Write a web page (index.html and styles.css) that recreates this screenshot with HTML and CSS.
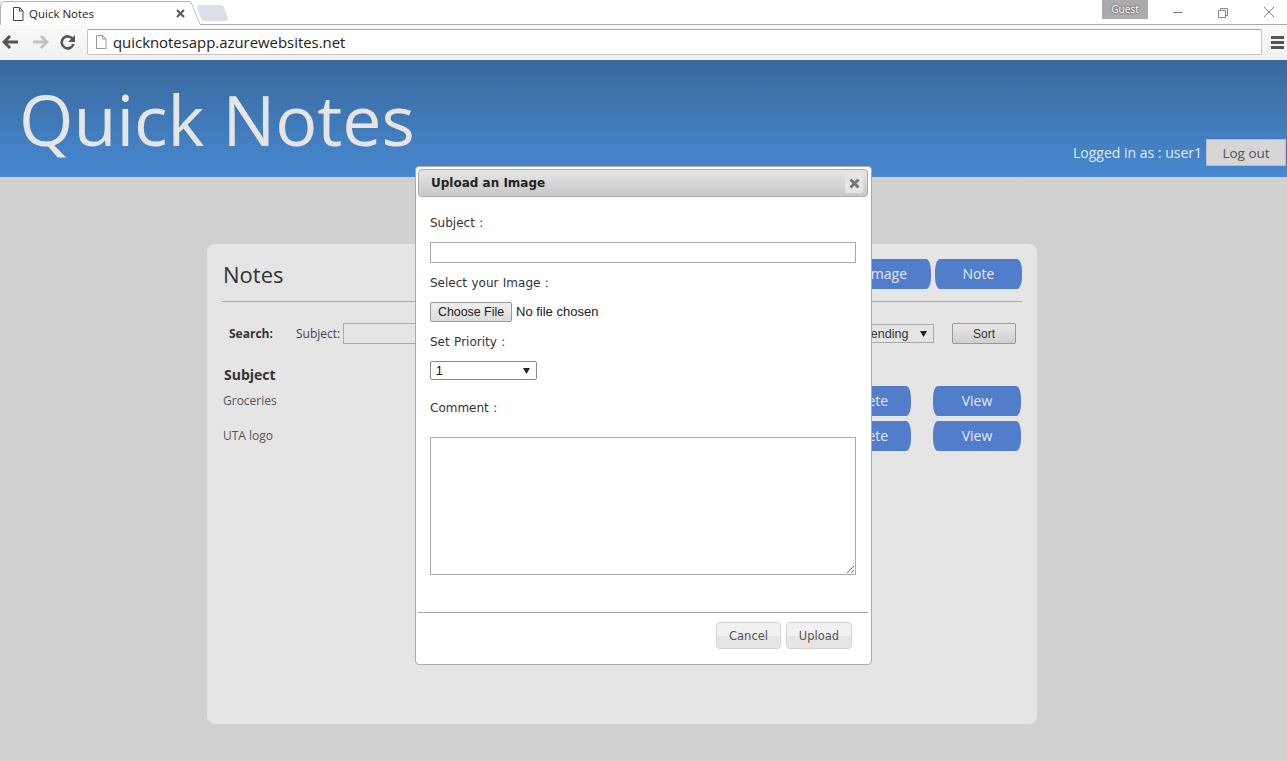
FILE: index.html
```html
<!DOCTYPE html>
<html>
<head>
<meta http-equiv="Content-Type" content="text/html; charset=utf-8"/>
<title>Quick Notes</title>
<link rel="stylesheet" href="styles.css">
</head>
<body>

<div class="browser">
  <div class="tabstrip">
    <div class="tab">
      <svg class="tab-icon" width="12" height="14" viewBox="0 0 12 14"><path d="M1.500 .5h6l3.500 3.500v9.500h-9.500z M7.500 .5v3.500h3.500" fill="#fff" stroke="#444"/></svg>
      <span class="tab-title">Quick Notes</span>
      <svg class="tab-close" width="9" height="9" viewBox="0 0 9 9"><path d="M1 1l7 7M8 1l-7 7" stroke="#555" stroke-width="2"/></svg>
    </div>
    <div class="newtab"></div>
    <div class="winctl">
      <span class="guest">Guest</span>
      <svg class="win-btn" width="46" height="14" viewBox="0 0 46 14"><path d="M25 7.500h10" stroke="#888"/></svg>
      <svg class="win-btn" width="46" height="14" viewBox="0 0 46 14"><path d="M24.500 5.500h7v7h-7zM26.500 5.500v-2h7v7h-2" fill="none" stroke="#888"/></svg>
      <svg class="win-btn" width="46" height="14" viewBox="0 0 46 14"><path d="M24 2l10 10M34 2l-10 10" stroke="#888"/></svg>
    </div>
  </div>
  <div class="toolbar">
    <svg class="nav-icon" width="18" height="14" viewBox="0 0 18 14"><path d="M8 1l-6 6 6 6M2 7h14" fill="none" stroke="#555" stroke-width="3"/></svg>
    <svg class="nav-icon fwd" width="18" height="14" viewBox="0 0 18 14"><path d="M10 1l6 6-6 6M16 7h-14" fill="none" stroke="#c4c4c4" stroke-width="3"/></svg>
    <svg class="nav-icon reload" width="16" height="16" viewBox="0 0 16 16"><path d="M13 5.500a6 6 0 1 0 .5 4.500" fill="none" stroke="#555" stroke-width="2.600"/><path d="M15 1v7h-7z" fill="#555"/></svg>
    <div class="omnibox">
      <svg width="12" height="14" viewBox="0 0 12 14"><path d="M1.500 .5h6l3.500 3.500v9.500h-9.500z M7.500 .5v3.500h3.500" fill="#fff" stroke="#999"/></svg>
      <span>quicknotesapp.azurewebsites.net</span>
    </div>
    <div class="menu-icon"><i></i><i></i><i></i></div>
  </div>
</div>

<div class="header">
  <h1 class="logo">Quick Notes</h1>
  <div class="userbox">
    <span>Logged in as : user1</span>
    <button class="logout">Log out</button>
  </div>
</div>

<div class="content">
  <div class="panel">
    <div class="panel-head">
      <h2>Notes</h2>
      <div class="add-btns">
        <a class="blue-btn add-image">Image</a>
        <a class="blue-btn add-note">Note</a>
      </div>
    </div>
    <div class="searchbar">
      <b>Search:</b>
      <label>Subject:</label>
      <input class="search-input" type="text">
      <span class="spacer"></span>
      <select class="order"><option>Ascending</option></select>
      <button class="sort">Sort</button>
    </div>
    <div class="notes-head">Subject</div>
    <div class="note-row">
      <span class="note-name">Groceries</span>
      <a class="blue-btn row-btn">Delete</a>
      <a class="blue-btn row-btn">View</a>
    </div>
    <div class="note-row">
      <span class="note-name">UTA logo</span>
      <a class="blue-btn row-btn">Delete</a>
      <a class="blue-btn row-btn">View</a>
    </div>
  </div>
</div>

<div class="dialog">
  <div class="dialog-title">
    <span>Upload an Image</span>
    <span class="dialog-close">
      <svg width="11" height="11" viewBox="0 0 11 11"><path d="M1.500 1.500l8 8M9.500 1.500l-8 8" stroke="#777" stroke-width="3"/></svg>
    </span>
  </div>
  <div class="dialog-body">
    <div class="lbl lbl-subject">Subject :</div>
    <input class="field" type="text">
    <div class="lbl lbl-image">Select your Image :</div>
    <div class="file-row"><button class="choose">Choose File</button><span class="no-file">No file chosen</span></div>
    <div class="lbl lbl-priority">Set Priority :</div>
    <select class="priority"><option>1</option></select>
    <div class="lbl lbl-comment">Comment :</div>
    <textarea class="comment"></textarea>
  </div>
  <div class="dialog-foot">
    <button class="ui-btn">Cancel</button>
    <button class="ui-btn">Upload</button>
  </div>
</div>

</body>
</html>
```

FILE: styles.css
```css
html, body {
  margin: 0;
  padding: 0;
}

body {
  height: 761px;
  overflow: hidden;
  background-color: #d1d1d1;
  font-family: "Open Sans", sans-serif;
  position: relative;
}

/* browser frame */
.browser {
  height: 60px;
  background: linear-gradient(#ffffff, #f1f1f1);
  font-family: "Noto Sans", sans-serif;
}

.tabstrip {
  height: 25px;
  display: flex;
  align-items: flex-end;
  background: #fff;
  border-bottom: 1px solid #a8a8a8;
  box-sizing: border-box;
}

.tab {
  position: relative;
  width: 190px;
  height: 24px;
  box-sizing: border-box;
  display: flex;
  align-items: center;
  padding: 0 0 0 11px;
  background: #fff;
  border-top: 1px solid #b5b5b5;
  border-left: 1px solid #b5b5b5;
  border-radius: 5px 0 0 0;
  margin-bottom: -1px;
}

.tab::after {
  content: "";
  position: absolute;
  right: -6px;
  top: -1px;
  bottom: 0;
  width: 12px;
  background: #fff;
  border-top: 1px solid #b5b5b5;
  border-right: 1px solid #a8a8a8;
  border-radius: 0 3px 0 0;
  transform: skewX(22deg);
}

.tab-icon {
  margin-right: 5px;
}

.tab-title {
  font-family: "Open Sans", sans-serif;
  font-size: 11.500px;
  color: #222;
  flex: 1;
}

.tab-close {
  position: relative;
  z-index: 1;
  margin-right: 5px;
}

.newtab {
  width: 27px;
  height: 16px;
  margin: 0 0 3px 9px;
  background: #dbe0e8;
  border-radius: 3px 4px 3px 3px;
  transform: skewX(18deg);
}

.winctl {
  margin-left: auto;
  align-self: flex-start;
  display: flex;
  padding-right: 1px;
}

.guest {
  width: 46px;
  height: 19px;
  background: #ababab;
  color: #fff;
  font-size: 10px;
  line-height: 18px;
  text-align: center;
  text-shadow: 0 0 2px #222;
}

.win-btn {
  margin-top: 5px;
}

.toolbar {
  height: 35px;
  box-sizing: border-box;
  display: flex;
  align-items: center;
  padding: 0 2px 1px 2px;
}

.nav-icon {
  flex: none;
}

.nav-icon.fwd {
  margin-left: 11px;
}

.nav-icon.reload {
  margin-left: 11px;
  margin-right: 11px;
}

.omnibox {
  flex: 1;
  height: 26px;
  box-sizing: border-box;
  border: 1px solid #c4c4c4;
  border-top-color: #a5a5a5;
  border-radius: 2px;
  background: #fff;
  display: flex;
  align-items: center;
  padding-left: 7px;
  gap: 6px;
  font-size: 14.900px;
  font-family: "Open Sans", sans-serif;
  color: #222;
}

.menu-icon {
  width: 13px;
  margin: 0 1px 0 9px;
  display: flex;
  flex-direction: column;
  gap: 2px;
}

.menu-icon i {
  display: block;
  height: 3px;
  background: #555;
}

/* site header */
.header {
  height: 117px;
  background: linear-gradient(#39699c, #4788d1);
  display: flex;
  justify-content: space-between;
  align-items: flex-end;
}

.logo {
  margin: 0 0 8px 19px;
  font-size: 70px;
  line-height: 100px;
  font-weight: 400;
  color: #e5e5e5;
}

.userbox {
  display: flex;
  align-items: center;
  gap: 4px;
  margin: 0 1px 11px 0;
  color: #e8e8e8;
  font-size: 14px;
}

.logout {
  width: 80px;
  height: 27px;
  border: 1px solid #bbb;
  background: #d6d6d6;
  color: #555;
  font-family: "Open Sans", sans-serif;
  font-size: 13.500px;
  padding: 0;
}

/* notes panel */
.content {
  padding: 67px 250px 0 207px;
}

.panel {
  width: 830px;
  height: 480px;
  box-sizing: border-box;
  background: #e5e5e5;
  border-radius: 8px;
  padding: 15px 15px 0 15px;
}

.panel-head {
  height: 42px;
  display: flex;
  justify-content: space-between;
  border-bottom: 1px solid #aaa;
}

.panel-head h2 {
  margin: 0 0 0 1px;
  font-size: 22px;
  line-height: 30px;
  font-weight: 400;
  color: #333;
}

.add-btns {
  display: flex;
  gap: 4px;
}

.blue-btn {
  display: block;
  background: #527dcb;
  color: #e3e8f2;
  font-size: 14px;
  text-align: center;
  border-radius: 5px / 12px;
}

.add-btns .blue-btn {
  height: 30px;
  line-height: 30px;
}

.add-image {
  width: 88px;
}

.add-note {
  width: 87px;
}

.searchbar {
  display: flex;
  align-items: center;
  height: 21px;
  margin-top: 21px;
  padding-left: 7px;
  font-size: 12px;
  color: #444;
}

.searchbar b {
  width: 67px;
  color: #333;
}

.search-input {
  width: 140px;
  height: 21px;
  box-sizing: border-box;
  margin: 0 0 0 3px;
  border: 1px solid #aaa;
  background: #e5e5e5;
}

.spacer {
  flex: 1;
}

.order, .priority {
  appearance: none;
  padding: 0 0 0 5px;
  background-image: url("data:image/svg+xml,%3Csvg xmlns='http://www.w3.org/2000/svg' width='7' height='6'%3E%3Cpath d='M0 0h7l-3.500 6z' fill='%23222'/%3E%3C/svg%3E");
  background-repeat: no-repeat;
  background-position: right 6px center;
}

.order {
  width: 90px;
  height: 19px;
  font-family: "Liberation Sans", sans-serif;
  font-size: 12.500px;
  color: #333;
  background-color: #e5e5e5;
  border: 1px solid #aaa;
}

.sort {
  width: 64px;
  height: 21px;
  margin: 0 6px 0 18px;
  border: 1px solid #999;
  border-radius: 2px;
  background: linear-gradient(#e8e8e8, #cfcfcf);
  font-family: "Liberation Sans", sans-serif;
  font-size: 12px;
  color: #333;
  padding: 0;
}

.notes-head {
  margin: 21px 0 0 2px;
  font-size: 14px;
  line-height: 20px;
  font-weight: 700;
  color: #333;
}

.note-row {
  display: flex;
  align-items: center;
  height: 30px;
  margin-bottom: 5px;
  padding-left: 1px;
}

.notes-head + .note-row {
  margin-top: 1px;
}

.note-name {
  flex: 1;
  padding-bottom: 2px;
  font-size: 12px;
  color: #555;
}

.row-btn {
  width: 88px;
  height: 30px;
  line-height: 30px;
  margin-right: 1px;
}

.row-btn + .row-btn {
  margin-left: 21px;
}

/* upload dialog */
.dialog {
  position: absolute;
  left: 415px;
  top: 166px;
  width: 457px;
  height: 499px;
  box-sizing: border-box;
  background: #fff;
  border: 1px solid #aaa;
  border-radius: 4px;
  padding: 2px 3px 2px 2px;
  font-family: "DejaVu Sans", sans-serif;
  font-size: 12px;
  color: #333;
}

.dialog-title {
  height: 28px;
  box-sizing: border-box;
  display: flex;
  align-items: center;
  justify-content: space-between;
  padding: 0 4px 0 12px;
  border: 1px solid #aaa;
  border-radius: 4px;
  background: linear-gradient(#e6e6e6, #c8c8c8);
  font-weight: 700;
  font-size: 12px;
  color: #222;
}

.dialog-close {
  width: 18px;
  height: 19px;
  display: flex;
  align-items: center;
  justify-content: center;
  background: #e6e6e6;
  border-radius: 3px;
}

.dialog-body {
  height: 416px;
  box-sizing: border-box;
  padding: 19px 0 0 12px;
  border-bottom: 1px solid #aaa;
}

.lbl {
  line-height: 15px;
  word-spacing: .6px;
}

.field {
  display: block;
  width: 426px;
  height: 21px;
  box-sizing: border-box;
  margin: 11px 0 0 0;
  border: 1px solid #aaa;
  padding: 0;
}

.lbl-image {
  margin-top: 13px;
}

.file-row {
  display: flex;
  align-items: center;
  height: 20px;
  margin-top: 11px;
  font-family: "Liberation Sans", sans-serif;
  font-size: 13px;
  color: #222;
}

.no-file {
  padding-bottom: 2px;
}

.choose {
  width: 82px;
  height: 20px;
  margin-right: 4px;
  padding: 0;
  border: 1px solid #999;
  border-radius: 2px;
  background: linear-gradient(#f0f0f0, #dcdcdc);
  font-family: "Liberation Sans", sans-serif;
  font-size: 12.400px;
  color: #222;
}

.lbl-priority {
  margin-top: 13px;
}

.priority {
  display: block;
  width: 107px;
  height: 19px;
  margin-top: 11px;
  font-family: "Liberation Sans", sans-serif;
  font-size: 12px;
  background-color: #fff;
  border: 1px solid #888;
  border-radius: 2px;
}

.lbl-comment {
  margin-top: 21px;
}

.comment {
  display: block;
  width: 426px;
  height: 138px;
  box-sizing: border-box;
  margin-top: 21px;
  border: 1px solid #aaa;
  padding: 0;
}

.dialog-foot {
  display: flex;
  justify-content: flex-end;
  gap: 5px;
  padding: 9px 16px 0 0;
}

.ui-btn {
  width: 65px;
  height: 27px;
  padding: 0;
  border: 1px solid #d3d3d3;
  border-radius: 4px;
  background: linear-gradient(#f1f1f1 50%, #e6e6e6 50%);
  font-family: "DejaVu Sans", sans-serif;
  font-size: 11.500px;
  color: #555;
}

.ui-btn + .ui-btn {
  width: 66px;
}
```
